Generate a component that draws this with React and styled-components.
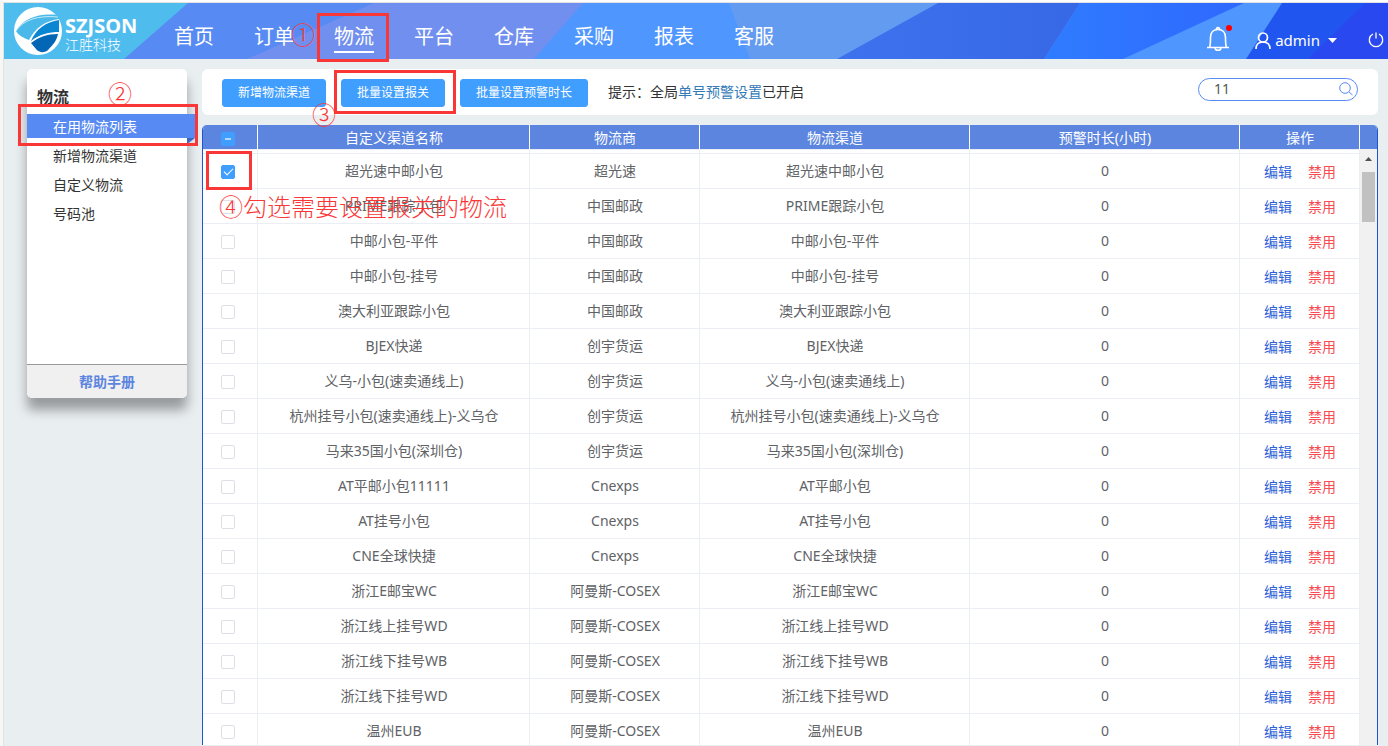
import React, { useState } from 'react';
import styled, { createGlobalStyle } from 'styled-components';

const GlobalStyle = createGlobalStyle`
	* {
		box-sizing: border-box;
	}

	body {
		margin: 0;
		background-color: #fff;
		color: #333;
		font-family: 'Noto Sans', 'Noto Sans CJK SC', sans-serif;
		font-size: 14px;
		line-height: 20px;
	}

	a {
		text-decoration: none;
	}
`;

const StyledPage = styled.div`
	position: relative;
	height: 100vh;
	overflow: hidden;
	display: flex;
	flex-direction: column;
	border-left: 3px solid #f6f7f5;
	padding-top: 2px;
`;

const StyledShell = styled.div`
	flex: 1;
	min-height: 0;
	display: flex;
	flex-direction: column;
	border-top: 1px solid #e2e2e2;
	border-left: 1px solid #e2e2e2;
	background-color: #e9eef1;
`;

const StyledHeader = styled.header`
	position: relative;
	flex: none;
	height: 56px;
	display: flex;
	align-items: center;
	background-color: #2a48f0;
	color: #fff;
`;

const StyledBackdrop = styled.svg`
	position: absolute;
	inset: 0;
	width: 100%;
	height: 100%;
`;

const StyledLogo = styled.a`
	position: relative;
	display: flex;
	align-items: center;
	gap: 3px;
	width: 170px;
	padding-left: 10px;
	color: #fff;
`;

const StyledLogoText = styled.span`
	display: flex;
	flex-direction: column;
	padding-top: 8px;
	font-size: 14px;
	line-height: 18px;

	strong {
		font-size: 20px;
		font-weight: 700;
		line-height: 20px;
	}

	span {
		font-weight: 300;
	}
`;

const StyledNav = styled.nav`
	position: relative;
	flex: 1;
	display: flex;
	gap: 40px;
	padding-top: 12px;
`;

const StyledNavLink = styled.a`
	height: 32px;
	padding-top: 2px;
	font-size: 20px;
	line-height: 28px;
	color: #fff;
	border-bottom: 2px solid ${props => props.$active ? '#fff' : 'transparent'};
`;

const StyledUserArea = styled.div`
	position: relative;
	display: flex;
	align-items: center;
	padding: 18px 4px 0 0;
`;

const StyledIconButton = styled.button`
	position: relative;
	display: flex;
	align-items: center;
	padding: 0;
	border: 0;
	background: none;
	color: #fff;
	font: inherit;
	font-size: 15px;
	cursor: pointer;
`;

const StyledBellButton = styled(StyledIconButton)`
	padding-bottom: 2px;
`;

const StyledDot = styled.span`
	position: absolute;
	top: -1px;
	right: -2px;
	width: 6px;
	height: 6px;
	border-radius: 50%;
	background-color: #f00;
`;

const StyledUserButton = styled(StyledIconButton)`
	gap: 4px;
	margin: 0 31px 0 25px;

	svg:last-child {
		margin-left: 4px;
	}
`;

const StyledBody = styled.div`
	flex: 1;
	min-height: 0;
	display: flex;
	align-items: flex-start;
	gap: 15px;
	padding: 10px 10px 1px 23px;
`;

const StyledSidebar = styled.aside`
	flex: none;
	width: 160px;
	height: 329px;
	display: flex;
	flex-direction: column;
	border-radius: 5px;
	background-color: #fff;
	box-shadow: 0 12px 12px rgba(0, 0, 0, 0.35);
`;

const StyledSidebarTitle = styled.h2`
	margin: 0;
	padding: 18px 10px 7px;
	font-size: 16px;
	line-height: 20px;
`;

const StyledMenu = styled.ul`
	flex: 1;
	margin: 0;
	padding: 0;
	list-style: none;
`;

const StyledMenuLink = styled.a`
	position: relative;
	display: block;
	width: ${props => props.$active ? '168px' : '160px'};
	margin-bottom: 5px;
	padding: 3px 0 1px 26px;
	background-color: ${props => props.$active ? '#588af3' : 'transparent'};
	color: ${props => props.$active ? '#fff' : '#333'};

	&::after {
		content: '';
		display: ${props => props.$active ? 'block' : 'none'};
		position: absolute;
		top: 100%;
		right: 0;
		border-top: 6px solid #3b66c4;
		border-right: 8px solid transparent;
	}
`;

const StyledHelp = styled.a`
	height: 34px;
	border-top: 1px solid #999;
	border-radius: 0 0 5px 5px;
	background-color: #f0f0f0;
	color: #5c85e0;
	font-weight: 700;
	line-height: 34px;
	text-align: center;
`;

const StyledContent = styled.main`
	flex: 1;
	min-width: 0;
	align-self: stretch;
	display: flex;
	flex-direction: column;
	gap: 10px;
`;

const StyledToolbar = styled.div`
	flex: none;
	height: 46px;
	display: flex;
	align-items: center;
	gap: 15px;
	padding: 0 20px;
	border-radius: 6px;
	background-color: #fff;
`;

const StyledButton = styled.button`
	height: 28px;
	margin-top: 2px;
	padding: 0 15px;
	border: 1px solid #409eff;
	border-radius: 3px;
	background-color: #409eff;
	color: #fff;
	font: inherit;
	font-size: 12px;
	cursor: pointer;
`;

const StyledHint = styled.p`
	flex: 1;
	margin: 0;
	padding-left: 5px;

	a {
		color: #337ab7;
	}
`;

const StyledSearch = styled.form`
	display: flex;
	align-items: center;
	width: 160px;
	height: 23px;
	margin-bottom: 6px;
	padding: 0 4px 0 15px;
	border: 1px solid #588af3;
	border-radius: 12px;
	color: #588af3;

	input {
		flex: 1;
		min-width: 0;
		padding: 0;
		border: 0;
		outline: 0;
		background: none;
		color: #555;
		font: inherit;
	}

	button {
		color: #588af3;
	}
`;

const StyledPanel = styled.div`
	flex: 1;
	min-height: 0;
	display: grid;
	grid-template-columns: 1fr 17px;
	overflow: hidden;
	border: solid #1e55d0;
	border-width: 0 1px;
	border-radius: 5px 5px 0 0;
	background-color: #fff;
`;

const StyledTable = styled.table`
	align-self: start;
	width: 100%;
	table-layout: fixed;
	border-collapse: separate;
	border-spacing: 0;
	color: #606266;
	text-align: center;

	th, td {
		padding: 0 0 0 1px;
		border: solid #ebeef5;
		border-width: 0 1px 1px 0;
	}

	th {
		height: 25px;
		padding-top: 2px;
		border-right-color: #fff;
		background-color: #5c85e0;
		background-clip: padding-box;
		color: #fff;
		font-weight: 400;
	}

	td {
		height: 35px;
	}
`;

const StyledGapRow = styled.tr`
	td {
		height: 4px;
	}
`;

const StyledCheckbox = styled.input`
	appearance: none;
	display: block;
	width: 14px;
	height: 14px;
	margin: 2px auto 0 17px;
	border: 1px solid #dcdfe6;
	border-radius: 2px;
	background-color: #fff;

	&:checked, &:indeterminate {
		border-color: #409eff;
		background-color: #409eff;
	}

	&:checked::after {
		content: '';
		display: block;
		width: 4px;
		height: 8px;
		margin-left: 4px;
		border: solid #fff;
		border-width: 0 1px 1px 0;
		transform: rotate(45deg);
	}

	&:indeterminate::after {
		content: '';
		display: block;
		width: 6px;
		height: 2px;
		margin: 5px 0 0 3px;
		background-color: #b3d8ff;
	}
`;

const StyledActions = styled.div`
	display: flex;
	justify-content: center;
	gap: 16px;
	padding-top: 2px;
`;

const StyledAction = styled.a`
	color: ${props => props.$danger ? '#f84b52' : '#2d61d8'};
`;

const StyledScrollbar = styled.div`
	display: flex;
	flex-direction: column;
	align-items: center;
	background-color: #f1f1f1;
`;

const StyledScrollHead = styled.div`
	width: 100%;
	height: 24px;
	background-color: #5c85e0;
`;

const StyledScrollThumb = styled.div`
	width: 13px;
	height: 50px;
	background-color: #c1c1c1;
`;

const StyledScrollArrow = styled.svg`
	flex: none;
	width: 17px;
	height: 23px;
`;

const StyledMark = styled.div`
	position: absolute;
	left: ${props => props.$left}px;
	top: ${props => props.$top}px;
	width: ${props => props.$width}px;
	height: ${props => props.$height}px;
	border: 3px solid #fa3737;
	pointer-events: none;
`;

const StyledNote = styled.span`
	position: absolute;
	left: ${props => props.$left}px;
	top: ${props => props.$top}px;
	color: #fa3737;
	font-family: 'Noto Sans CJK SC', sans-serif;
	font-size: 24px;
	font-weight: 300;
	line-height: 24px;
	white-space: nowrap;
	pointer-events: none;
`;

const navItems = ['首页', '订单', '物流', '平台', '仓库', '采购', '报表', '客服'];

const menuItems = ['在用物流列表', '新增物流渠道', '自定义物流', '号码池'];

const channels = [
	{ name: '超光速中邮小包', provider: '超光速', channel: '超光速中邮小包' },
	{ name: 'PRIME跟踪小包', provider: '中国邮政', channel: 'PRIME跟踪小包' },
	{ name: '中邮小包-平件', provider: '中国邮政', channel: '中邮小包-平件' },
	{ name: '中邮小包-挂号', provider: '中国邮政', channel: '中邮小包-挂号' },
	{ name: '澳大利亚跟踪小包', provider: '中国邮政', channel: '澳大利亚跟踪小包' },
	{ name: 'BJEX快递', provider: '创宇货运', channel: 'BJEX快递' },
	{ name: '义乌-小包(速卖通线上)', provider: '创宇货运', channel: '义乌-小包(速卖通线上)' },
	{ name: '杭州挂号小包(速卖通线上)-义乌仓', provider: '创宇货运', channel: '杭州挂号小包(速卖通线上)-义乌仓' },
	{ name: '马来35国小包(深圳仓)', provider: '创宇货运', channel: '马来35国小包(深圳仓)' },
	{ name: 'AT平邮小包11111', provider: 'Cnexps', channel: 'AT平邮小包' },
	{ name: 'AT挂号小包', provider: 'Cnexps', channel: 'AT挂号小包' },
	{ name: 'CNE全球快捷', provider: 'Cnexps', channel: 'CNE全球快捷' },
	{ name: '浙江E邮宝WC', provider: '阿曼斯-COSEX', channel: '浙江E邮宝WC' },
	{ name: '浙江线上挂号WD', provider: '阿曼斯-COSEX', channel: '浙江线上挂号WD' },
	{ name: '浙江线下挂号WB', provider: '阿曼斯-COSEX', channel: '浙江线下挂号WB' },
	{ name: '浙江线下挂号WD', provider: '阿曼斯-COSEX', channel: '浙江线下挂号WD' },
	{ name: '温州EUB', provider: '阿曼斯-COSEX', channel: '温州EUB' }
];

function Backdrop() {

	return (
		<StyledBackdrop viewBox="0 0 1384 56" preserveAspectRatio="none" aria-hidden="true">
			<defs>
				<linearGradient id="steel" x1="0" x2="1">
					<stop offset="0" stopColor="#3d72ee" />
					<stop offset="1" stopColor="#3768e6" />
				</linearGradient>
				<linearGradient id="azure" x1="0" x2="1">
					<stop offset="0" stopColor="#2f7cff" />
					<stop offset="1" stopColor="#2f68ff" />
				</linearGradient>
			</defs>
			<path d="M0 0H1361L1304 56H0Z" fill="#2155ef" />
			<path d="M0 0H1278L1242 56H0Z" fill="#4f96ff" />
			<path d="M1076 0H1240L1119 56H1040Z" fill="url(#azure)" />
			<path d="M833 0H1076L1040 56H833Z" fill="url(#steel)" />
			<path d="M0 0H934L833 56H0Z" fill="#629bf0" />
			<path d="M0 0H725L746 56H0Z" fill="#5096ff" />
			<path d="M0 0H579L530 56H0Z" fill="#708fee" />
			<path d="M0 0H370L243 56H0Z" fill="#588af3" />
			<path d="M0 0H184L120 56H0Z" fill="#4fbcee" />
		</StyledBackdrop>
	);

}

function LogoMark() {

	return (
		<svg width="48" height="48" viewBox="0 0 48 48" aria-hidden="true">
			<circle cx="24" cy="24" r="24" fill="#fff" />
			<path d="M2 24C9 12 24 6 43 8C45 9 45 11 45 12C31 14 21 21 15 33C10 31 5 29 2 24Z" fill="#4ab8e8" />
			<path d="M2 24C9 13 24 8 44 10" fill="none" stroke="#c5ebfa" strokeWidth="1" />
			<path d="M45 13C32 15 22 22 17 34C26 27 35 25 45 25Z" fill="#0a86d2" />
			<path d="M44 27C33 27 25 30 17 36L22 42C25 46 31 46 34 43C39 38 43 33 44 27Z" fill="#0467b6" />
		</svg>
	);

}

function ChannelRow({ item, checked, onToggle }) {

	return (
		<tr>
			<td><StyledCheckbox type="checkbox" aria-label={item.name} checked={checked} onChange={onToggle} /></td>
			<td>{item.name}</td>
			<td>{item.provider}</td>
			<td>{item.channel}</td>
			<td>0</td>
			<td>
				<StyledActions>
					<StyledAction href="#edit">编辑</StyledAction>
					<StyledAction href="#disable" $danger>禁用</StyledAction>
				</StyledActions>
			</td>
		</tr>
	);

}

function App() {

	const [selected, setSelected] = useState([0]);
	const [keyword, setKeyword] = useState('11');

	const allSelected = selected.length === channels.length;
	const someSelected = selected.length > 0 && !allSelected;

	const toggleRow = index => {
		setSelected(selected.includes(index) ? selected.filter(i => i !== index) : [...selected, index]);
	};

	const toggleAll = () => {
		setSelected(allSelected ? [] : channels.map((item, index) => index));
	};

	return (
		<StyledPage>
			<GlobalStyle />
			<StyledShell>
				<StyledHeader>
					<Backdrop />
					<StyledLogo href="#home">
						<LogoMark />
						<StyledLogoText>
							<strong>SZJSON</strong>
							<span>江胜科技</span>
						</StyledLogoText>
					</StyledLogo>
					<StyledNav>
						{navItems.map(label => (
							<StyledNavLink key={label} href="#nav" $active={label === '物流'}>{label}</StyledNavLink>
						))}
					</StyledNav>
					<StyledUserArea>
						<StyledBellButton type="button" aria-label="Notifications">
							<svg width="24" height="26" viewBox="0 0 24 26" fill="none" stroke="#fff" strokeWidth="1.6" aria-hidden="true">
								<path d="M1 21.5H23M3.5 21.5C4.5 19 4.500 17 4.500 11.500C4.500 6.500 7.500 3.500 12 3.500S19.500 6.500 19.500 11.500C19.500 17 19.500 19 20.500 21.500" />
								<path d="M10.500 3.500C10.500 1 13.500 1 13.500 3.500M9 22C9.500 25 14.500 25 15 22" />
							</svg>
							<StyledDot />
						</StyledBellButton>
						<StyledUserButton type="button">
							<svg width="16" height="17" viewBox="0 0 16 17" fill="none" stroke="#fff" strokeWidth="1.7" aria-hidden="true">
								<circle cx="8" cy="5.500" r="4.500" />
								<path d="M1 17C1 12.500 3.500 10 8 10S15 12.500 15 17" />
							</svg>
							admin
							<svg width="9" height="5" viewBox="0 0 9 5" aria-hidden="true">
								<path d="M0 0H9L4.500 5Z" fill="#fff" />
							</svg>
						</StyledUserButton>
						<StyledIconButton type="button" aria-label="Sign out">
							<svg width="16" height="16" viewBox="0 0 16 16" fill="none" stroke="#fff" strokeWidth="1.3" aria-hidden="true">
								<path d="M5 2A6.700 6.700 0 1 0 11 2M8 0.500V6.500" />
							</svg>
						</StyledIconButton>
					</StyledUserArea>
				</StyledHeader>
				<StyledBody>
					<StyledSidebar>
						<StyledSidebarTitle>物流</StyledSidebarTitle>
						<StyledMenu>
							{menuItems.map((label, index) => (
								<li key={label}><StyledMenuLink href="#menu" $active={index === 0}>{label}</StyledMenuLink></li>
							))}
						</StyledMenu>
						<StyledHelp href="#help">帮助手册</StyledHelp>
					</StyledSidebar>
					<StyledContent>
						<StyledToolbar>
							<StyledButton type="button">新增物流渠道</StyledButton>
							<StyledButton type="button">批量设置报关</StyledButton>
							<StyledButton type="button">批量设置预警时长</StyledButton>
							<StyledHint>提示：全局<a href="#warning">单号预警设置</a>已开启</StyledHint>
							<StyledSearch onSubmit={e => e.preventDefault()}>
								<input type="text" aria-label="Search" value={keyword} onChange={e => setKeyword(e.target.value)} />
								<StyledIconButton type="submit" aria-label="Search">
									<svg width="14" height="14" viewBox="0 0 14 14" fill="none" stroke="currentColor" aria-hidden="true">
										<circle cx="6" cy="6" r="5.300" />
										<path d="M10 10L13.500 13" />
									</svg>
								</StyledIconButton>
							</StyledSearch>
						</StyledToolbar>
						<StyledPanel>
							<StyledTable>
								<colgroup>
									<col width="55" />
									<col width="272" />
									<col width="170" />
									<col />
									<col />
									<col width="120" />
								</colgroup>
								<thead>
									<tr>
										<th>
											<StyledCheckbox
												type="checkbox"
												aria-label="Select all"
												ref={el => { if (el) el.indeterminate = someSelected; }}
												checked={allSelected}
												onChange={toggleAll}
											/>
										</th>
										<th>自定义渠道名称</th>
										<th>物流商</th>
										<th>物流渠道</th>
										<th>预警时长(小时)</th>
										<th>操作</th>
									</tr>
								</thead>
								<tbody>
									<StyledGapRow>
										<td /><td /><td /><td /><td /><td />
									</StyledGapRow>
									{channels.map((item, index) => (
										<ChannelRow
											key={item.name}
											item={item}
											checked={selected.includes(index)}
											onToggle={() => toggleRow(index)}
										/>
									))}
								</tbody>
							</StyledTable>
							<StyledScrollbar>
								<StyledScrollHead />
								<StyledScrollArrow viewBox="0 0 17 23" aria-hidden="true">
									<path d="M5 12L8.500 8L12 12Z" fill="#505050" />
								</StyledScrollArrow>
								<StyledScrollThumb />
							</StyledScrollbar>
						</StyledPanel>
					</StyledContent>
				</StyledBody>
			</StyledShell>
			<StyledMark $left={314} $top={13} $width={72} $height={49} />
			<StyledMark $left={15} $top={104} $width={180} $height={42} />
			<StyledMark $left={331} $top={70} $width={122} $height={44} />
			<StyledMark $left={203} $top={151} $width={46} $height={39} />
			<StyledNote $left={288} $top={22}>①</StyledNote>
			<StyledNote $left={105} $top={81}>②</StyledNote>
			<StyledNote $left={309} $top={102}>③</StyledNote>
			<StyledNote $left={216} $top={194}>④勾选需要设置报关的物流</StyledNote>
		</StyledPage>
	);

}

export default App;
